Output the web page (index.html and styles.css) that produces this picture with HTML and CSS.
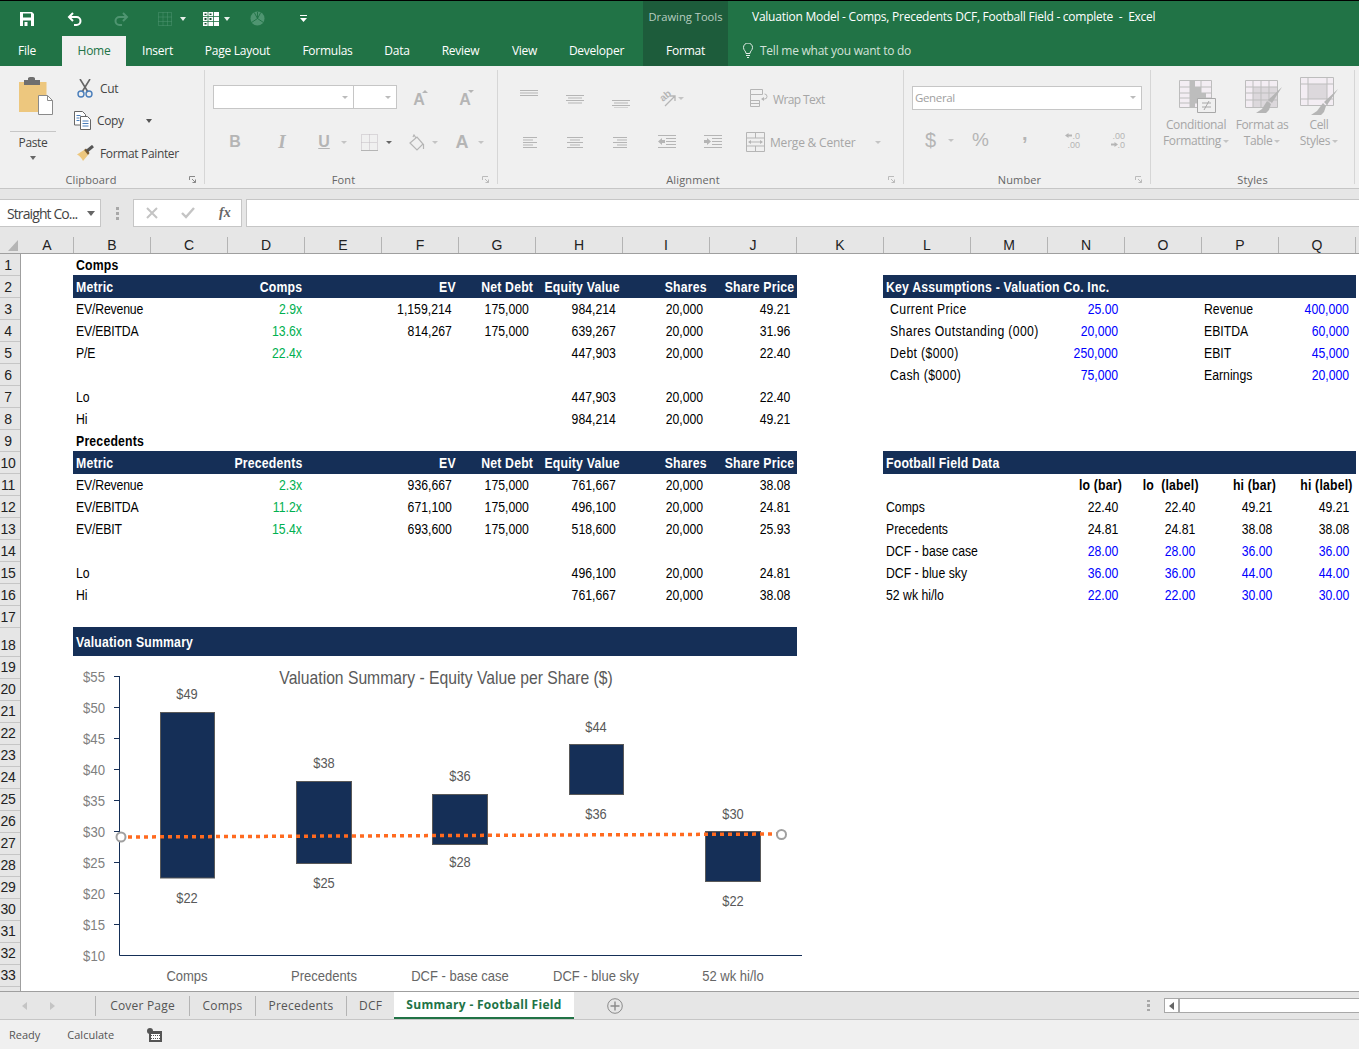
FILE: index.html
```html
<!DOCTYPE html>
<html lang="en">
<head>
<meta charset="utf-8">
<title>Valuation Model - Excel</title>
<link rel="stylesheet" href="styles.css">
</head>
<body>
<div class="app">

<header class="chrome">
  <div class="titlerow">
    <div class="qat">
      <svg class="q-save" width="14" height="14" viewBox="0 0 14 14"><path fill="#fff" d="M0 0h12l2 2v12H0z"/><path fill="#217346" d="M3 1.500h8v4H3zM3 8.500h8V14H3z"/><path fill="#fff" d="M4.500 10h3v4h-3z"/></svg>
      <svg class="q-undo" width="15" height="14" viewBox="0 0 15 14"><path fill="none" stroke="#fff" stroke-width="2" d="M6 1 2 5l4 4M2 5h7.500a4 4 0 0 1 0 8H7"/></svg>
      <svg class="q-redo" width="15" height="14" viewBox="0 0 15 14"><path fill="none" stroke="#4f9571" stroke-width="2" d="m9 1 4 4-4 4m4-4H5.500a4 4 0 0 0 0 8H8"/></svg>
      <svg class="q-grid" width="14" height="14" viewBox="0 0 14 14"><path fill="none" stroke="#4f9571" stroke-dasharray="1 1" d="M.5.500h13v13H.500zM5 .5v13M9.500.5v13M.5 5h13M.5 9.500h13"/></svg>
      <svg class="caret q-c1" width="6" height="4" viewBox="0 0 6 4"><path fill="#e8f0eb" d="M0 0h6L3 4z"/></svg>
      <svg class="q-table" width="16" height="14" viewBox="0 0 16 14"><path fill="#fff" d="M0 0h16v14H0z"/><path fill="none" stroke="#217346" stroke-width=".8" d="M5 0v14M10.500 0v14M0 4.500h16M0 9.500h16"/><path fill="#174d30" d="M1.500 1.500h2v1.500h-2zM6.500 1.500h2v1.500h-2zM1.500 6h2v2h-2zM6.500 6h2v2h-2zM1.500 11h2v1.500h-2z"/></svg>
      <svg class="caret q-c2" width="6" height="4" viewBox="0 0 6 4"><path fill="#e8f0eb" d="M0 0h6L3 4z"/></svg>
      <svg class="q-pie" width="15" height="15" viewBox="0 0 16 16"><circle cx="8" cy="8" r="7.500" fill="#4f9571"/><path fill="none" stroke="#217346" d="M8 8V1M8 8l6 4M8 8l-6 4M8 8l3.500-6.500M8 8 4.500 1.500"/></svg>
      <svg class="q-more" width="7" height="7" viewBox="0 0 7 7"><path fill="#fff" d="M0 0h7v1H0zM0 3h7L3.500 7z"/></svg>
    </div>
    <div class="tools-title">Drawing Tools</div>
    <div class="doc-title">Valuation Model - Comps, Precedents DCF, Football Field - complete&nbsp; -&nbsp; Excel</div>
  </div>
  <nav class="tabrow">
    <div class="rtab file">File</div>
    <div class="rtab home">Home</div>
    <div class="rtab">Insert</div>
    <div class="rtab">Page Layout</div>
    <div class="rtab">Formulas</div>
    <div class="rtab">Data</div>
    <div class="rtab">Review</div>
    <div class="rtab">View</div>
    <div class="rtab dev">Developer</div>
    <div class="rtab format">Format</div>
    <div class="tell">
      <svg width="10" height="15" viewBox="0 0 10 15"><path fill="none" stroke="#e4eee8" d="M3 10.500C3 8 .5 7.500.5 4.500a4.500 4.500 0 0 1 9 0C9.500 7.500 7 8 7 10.500zM3 12.500h4M4 14.500h2"/></svg>
      <span>Tell me what you want to do</span>
    </div>
  </nav>
</header>

<section class="ribbon">
  <div class="group g-clip">
    <div class="g-body clip">
      <div class="paste">
        <svg class="paste-ic" width="34" height="38" viewBox="0 0 34 38"><path fill="#edc77e" d="M0 5h27.500v30H0z"/><path fill="#6f6f6f" d="M5 3h4V1.500C9 .5 10 0 12.500 0S16 .5 16 1.500V3h5v5H5z"/><path fill="#fff" stroke="#8a8a8a" d="M19.500 18.500h9l5 5v14h-14z"/><path fill="none" stroke="#8a8a8a" d="M28.500 18.500v5h5"/></svg>
        <div class="paste-line"></div>
        <div class="paste-t">Paste</div>
        <svg class="paste-c" width="6" height="4" viewBox="0 0 6 4"><path fill="#666" d="M0 0h6L3 4z"/></svg>
      </div>
      <div class="cliplist">
        <div class="cl cl-cut">
          <svg width="16" height="19" viewBox="0 0 16 19"><path fill="none" stroke="#666" stroke-width="1.600" d="M3 0l8 13M13 0 5 13"/><circle cx="4" cy="15" r="3" fill="none" stroke="#4a7ebb" stroke-width="1.400"/><circle cx="12" cy="15" r="3" fill="none" stroke="#4a7ebb" stroke-width="1.400"/></svg>
          <span>Cut</span>
        </div>
        <div class="cl cl-copy">
          <svg width="17" height="19" viewBox="0 0 17 19"><path fill="#fff" stroke="#666" d="M.5.500h8l3 3V14H.500z"/><path fill="#fff" stroke="#666" d="M6.500 5.500h7l3 3v10h-10z"/><path stroke="#4a7ebb" d="M2.500 4.500h4M2.500 7h3M2.500 9.500h3M8.500 10h6M8.500 12.500h6M8.500 15h6"/></svg>
          <span>Copy</span>
          <svg class="copy-c" width="6" height="4" viewBox="0 0 6 4"><path fill="#555" d="M0 0h6L3 4z"/></svg>
        </div>
        <div class="cl cl-fp">
          <svg width="18" height="16" viewBox="0 0 18 16"><path fill="#edc77e" d="M0 9.500 7 5l4 5-5 6c-1-2-3-5-6-6.500z"/><path fill="#7a5a2c" d="m7 5 2-1.500 3.500 4.500L11 10z"/><path stroke="#555" stroke-width="3" d="m10 6 6-5"/></svg>
          <span>Format Painter</span>
        </div>
      </div>
    </div>
    <div class="g-foot pad7"><span class="g-name">Clipboard</span><svg class="launch" width="7" height="7" viewBox="0 0 7 7"><path fill="none" stroke="#888" d="M.5 4V.5H6M3 3l3.500 3.500M3.500 6.500h3v-3"/></svg></div>
  </div>
  <div class="sep"></div>

  <div class="group g-font">
    <div class="g-body fontb">
      <div class="r1">
        <div class="inbox font-name"><svg width="6" height="3" viewBox="0 0 6 3"><path fill="#bbb" d="M0 0h6L3 3z"/></svg></div>
        <div class="inbox font-size"><svg width="6" height="3" viewBox="0 0 6 3"><path fill="#bbb" d="M0 0h6L3 3z"/></svg></div>
        <div class="grow up"><span>A</span><svg width="6" height="3" viewBox="0 0 6 3"><path fill="#b5b5b5" d="M3 0l3 3H0z"/></svg></div>
        <div class="grow down"><span>A</span><svg width="6" height="3" viewBox="0 0 6 3"><path fill="#b5b5b5" d="M0 0h6L3 3z"/></svg></div>
      </div>
      <div class="r2">
        <span class="tb tb-b">B</span>
        <span class="tb tb-i">I</span>
        <span class="tb tb-u">U</span>
        <svg class="c1" width="6" height="3" viewBox="0 0 6 3"><path fill="#c4c4c4" d="M0 0h6L3 3z"/></svg>
        <svg class="bd" width="17" height="17" viewBox="0 0 17 17"><path fill="none" stroke="#c3bcc3" stroke-dasharray="1 1" d="M.5.500h16v16H.500zM8.500.5v16M.5 8.500h16"/><path stroke="#b5b5b5" d="M0 16.500h17"/></svg>
        <svg class="c2" width="6" height="3" viewBox="0 0 6 3"><path fill="#666" d="M0 0h6L3 3z"/></svg>
        <svg class="fl" width="17" height="17" viewBox="0 0 17 17"><path fill="none" stroke="#b5b5b5" stroke-width="1.200" d="M1 9l7-6 6 7-6 6zM7 4 5 1l-1 2M14.500 10v5"/></svg>
        <svg class="c3" width="6" height="3" viewBox="0 0 6 3"><path fill="#c4c4c4" d="M0 0h6L3 3z"/></svg>
        <span class="tb tb-a">A</span>
        <svg class="c4" width="6" height="3" viewBox="0 0 6 3"><path fill="#c4c4c4" d="M0 0h6L3 3z"/></svg>
      </div>
    </div>
    <div class="g-foot"><span class="g-name">Font</span><svg class="launch" width="7" height="7" viewBox="0 0 7 7"><path fill="none" stroke="#bbb" d="M.5 4V.5H6M3 3l3.500 3.500M3.500 6.500h3v-3"/></svg></div>
  </div>
  <div class="sep"></div>

  <div class="group g-align">
    <div class="g-body alignb">
      <div class="ar ar1">
        <svg class="a1" width="18" height="20" viewBox="0 0 18 20"><path stroke="#b5b5b5" d="M0 2.500h18M0 5h18M0 7.500h18"/></svg>
        <svg class="a2" width="18" height="20" viewBox="0 0 18 20"><path stroke="#b5b5b5" d="M0 7.500h18M2 10h14M0 12.500h18M2 15h14"/></svg>
        <svg class="a2" width="18" height="20" viewBox="0 0 18 20"><path stroke="#b5b5b5" d="M0 12.500h18M2 15h14M0 17.500h18M2 20h14"/></svg>
        <svg class="a-or" width="19" height="20" viewBox="0 0 19 20"><text class="orient" transform="rotate(-40 6 14)" x="6" y="14">ab</text><path fill="none" stroke="#b5b5b5" stroke-width="1.300" d="M8 18 18 8M13 8h5v5"/></svg>
        <svg class="a-orc" width="6" height="3" viewBox="0 0 6 3"><path fill="#c4c4c4" d="M0 0h6L3 3z"/></svg>
        <svg class="a-wr" width="18" height="20" viewBox="0 0 18 20"><path fill="none" stroke="#b5b5b5" d="M.5 1.500h12v5H.5zM.5 6.500v12h9v-6H.5M.5 15.500h9M12 11h2.500a2.500 2.500 0 0 0 0-5"/><path fill="#b5b5b5" d="m14 9-3 2 3 2z"/></svg>
        <span class="a-t a-wrt">Wrap Text</span>
      </div>
      <div class="ar ar2">
        <svg class="a1" width="18" height="20" viewBox="0 0 18 20"><path stroke="#b5b5b5" d="M3 5.500h14M3 8h10M3 10.500h14M3 13h10M3 15.500h14"/></svg>
        <svg class="a2" width="18" height="20" viewBox="0 0 18 20"><path stroke="#b5b5b5" d="M1 5.500h16M4 8h10M1 10.500h16M4 13h10M1 15.500h16"/></svg>
        <svg class="a2" width="18" height="20" viewBox="0 0 18 20"><path stroke="#b5b5b5" d="M1 5.500h14M5 8h10M1 10.500h14M5 13h10M1 15.500h14"/></svg>
        <svg class="a2" width="18" height="20" viewBox="0 0 18 20"><path stroke="#b5b5b5" d="M0 3.500h18M8 6.500h10M8 9.500h10M8 12.500h10M0 15.500h18"/><path fill="#b5b5b5" d="M0 9.500 4 6v2h3v3H4v2z"/></svg>
        <svg class="a2" width="18" height="20" viewBox="0 0 18 20"><path stroke="#b5b5b5" d="M0 3.500h18M8 6.500h10M8 9.500h10M8 12.500h10M0 15.500h18"/><path fill="#b5b5b5" d="M7 9.500 3 6v2H0v3h3v2z"/></svg>
        <svg class="a-mg" width="19" height="20" viewBox="0 0 19 20"><path fill="none" stroke="#b5b5b5" d="M.5.500h18v19H.5zM.5 6h18M.5 14h18M9.500.5V6M9.500 14v5.500M3 10h13"/><path fill="#b5b5b5" d="M2 10l3-2v4zM17 10l-3-2v4z"/></svg>
        <span class="a-t a-mgt">Merge &amp; Center</span>
        <svg class="a-mgc" width="6" height="3" viewBox="0 0 6 3"><path fill="#c4c4c4" d="M0 0h6L3 3z"/></svg>
      </div>
    </div>
    <div class="g-foot"><span class="g-name">Alignment</span><svg class="launch" width="7" height="7" viewBox="0 0 7 7"><path fill="none" stroke="#bbb" d="M.5 4V.5H6M3 3l3.500 3.500M3.500 6.500h3v-3"/></svg></div>
  </div>
  <div class="sep"></div>

  <div class="group g-num">
    <div class="g-body numb">
      <div class="inbox gen">General<svg width="6" height="3" viewBox="0 0 6 3"><path fill="#bbb" d="M0 0h6L3 3z"/></svg></div>
      <div class="nr">
        <span class="ntx n-d">$</span>
        <svg class="n-dc" width="6" height="3" viewBox="0 0 6 3"><path fill="#c4c4c4" d="M0 0h6L3 3z"/></svg>
        <span class="ntx n-p">%</span>
        <span class="ntx n-c">,</span>
        <svg class="n-i1" width="17" height="20" viewBox="0 0 17 20"><text x="16" y="9" class="nsm">.0</text><text x="16" y="18" class="nsm">.00</text><path fill="#b5b5b5" d="M1 5.500 4.500 3v1.500H8v2H4.500V8z"/></svg>
        <svg class="n-i2" width="17" height="20" viewBox="0 0 17 20"><text x="16" y="9" class="nsm">.00</text><text x="16" y="18" class="nsm">.0</text><path fill="#b5b5b5" d="M9 14.500 5.500 12v1.500H2v2h3.500V17z"/></svg>
      </div>
    </div>
    <div class="g-foot"><span class="g-name">Number</span><svg class="launch" width="7" height="7" viewBox="0 0 7 7"><path fill="none" stroke="#bbb" d="M.5 4V.5H6M3 3l3.500 3.500M3.500 6.500h3v-3"/></svg></div>
  </div>
  <div class="sep"></div>

  <div class="group g-styles">
    <div class="g-body stylesb">
      <div class="st st-cf">
        <svg width="37" height="39" viewBox="0 0 37 39"><path fill="#f3edf3" stroke="#bdbdbd" d="M.5 3.500h32v27H.500z"/><path fill="#bdbdbd" d="M11 4h5v6h-5zM11 10h11v6H11zM11 16h16v5H11zM11 21h11v5H11zM11 26h5v5h-5z"/><path fill="none" stroke="#bdbdbd" d="M11 3.500v27M22 3.500v27M.5 10h32M.5 16h32M.5 21h32M.5 26h32"/><path fill="#f0f0f0" stroke="#a8a8a8" d="M18.500 21.500h18v14h-18z"/><path stroke="#a8a8a8" d="M23 26h9M23 30h9M30 24l-5 9"/></svg>
        <div class="st-t">Conditional</div>
        <div class="st-t">Formatting<svg width="6" height="3" viewBox="0 0 6 3"><path fill="#c4c4c4" d="M0 0h6L3 3z"/></svg></div>
      </div>
      <div class="st st-ft">
        <svg width="37" height="39" viewBox="0 0 37 39"><path fill="#f3edf3" stroke="#bdbdbd" d="M.5 3.500h32v27H.500z"/><path fill="#dcd8dc" d="M8 10h24v20H8z"/><path fill="none" stroke="#bdbdbd" d="M8 3.500v27M16 3.500v27M24 3.500v27M.5 10h32M.5 16h32M.5 23h32"/><path fill="#b5b5b5" d="m37 10-10 16-4-3zM22 24l4 3-2 6-3 3H11l6-4z"/></svg>
        <div class="st-t">Format as</div>
        <div class="st-t">Table<svg width="6" height="3" viewBox="0 0 6 3"><path fill="#c4c4c4" d="M0 0h6L3 3z"/></svg></div>
      </div>
      <div class="st st-cs">
        <svg width="38" height="39" viewBox="0 0 38 39"><path fill="#f3edf3" stroke="#bdbdbd" d="M.5.500h33v28H.500z"/><path fill="#dcd8dc" d="M8 7h19v15H8z"/><path fill="none" stroke="#bdbdbd" d="M.5 7h33M.5 22h33M8 .5v28M27 .5v28"/><path fill="#b5b5b5" d="m38 12-11 16-3-3zM23 26l3 3-2 6-3 3H11l6-4z"/></svg>
        <div class="st-t">Cell</div>
        <div class="st-t">Styles<svg width="6" height="3" viewBox="0 0 6 3"><path fill="#c4c4c4" d="M0 0h6L3 3z"/></svg></div>
      </div>
    </div>
    <div class="g-foot"><span class="g-name">Styles</span></div>
  </div>
  <div class="sep"></div>
</section>

<section class="fbar">
  <div class="fbox namebox"><span>Straight Co...</span><svg width="8" height="5" viewBox="0 0 8 5"><path fill="#666" d="M0 0h8L4 5z"/></svg></div>
  <svg class="grip" width="3" height="13" viewBox="0 0 3 13"><path fill="#a8a8a8" d="M0 0h3v3H0zM0 5h3v3H0zM0 10h3v3H0z"/></svg>
  <div class="fbox fxbox">
    <svg width="14" height="12" viewBox="0 0 14 12"><path fill="none" stroke="#c4c4c4" stroke-width="2" d="m2 1 10 10M12 1 2 11"/></svg>
    <svg width="14" height="12" viewBox="0 0 14 12"><path fill="none" stroke="#c4c4c4" stroke-width="2.400" d="m1 6 4 4 8-9"/></svg>
    <span class="fx">fx</span>
  </div>
  <div class="fbox finput"></div>
</section>

<div class="colhead">
  <div class="corner"><svg width="10" height="11" viewBox="0 0 10 11"><path fill="#b5b5b5" d="M10 0v11H0z"/></svg></div>
  <div class="ch">A</div><div class="ch">B</div><div class="ch">C</div><div class="ch">D</div><div class="ch">E</div><div class="ch">F</div><div class="ch">G</div><div class="ch">H</div><div class="ch">I</div><div class="ch">J</div><div class="ch">K</div><div class="ch">L</div><div class="ch">M</div><div class="ch">N</div><div class="ch">O</div><div class="ch">P</div><div class="ch">Q</div>
</div>

<main class="sheet">
  <div class="rowheads">
    <div>1</div><div>2</div><div>3</div><div>4</div><div>5</div><div>6</div><div>7</div><div>8</div><div>9</div><div>10</div><div>11</div><div>12</div><div>13</div><div>14</div><div>15</div><div>16</div><div>17</div><div class="tall">18</div><div>19</div><div>20</div><div>21</div><div>22</div><div>23</div><div>24</div><div>25</div><div>26</div><div>27</div><div>28</div><div>29</div><div>30</div><div>31</div><div>32</div><div>33</div><div></div>
  </div>
  <div class="cells">
    <div class="row"><div class="c cB b">Comps</div></div>
    <div class="row"><div class="band band-l"></div><div class="band band-r"></div>
      <div class="c cB h">Metric</div><div class="c cD h r">Comps</div><div class="c cF h r">EV</div><div class="c cG h r">Net Debt</div><div class="c cH h r">Equity Value</div><div class="c cI h r">Shares</div><div class="c cJ h r">Share Price</div><div class="c cL h">Key Assumptions - Valuation Co. Inc.</div></div>
    <div class="row"><div class="c cB">EV/Revenue</div><div class="c cD r g">2.9x</div><div class="c cF n">1,159,214</div><div class="c cG n">175,000</div><div class="c cH n">984,214</div><div class="c cI n">20,000</div><div class="c cJ n">49.21</div><div class="c cL in">Current Price</div><div class="c cN n bl">25.00</div><div class="c cP">Revenue</div><div class="c cQ n bl">400,000</div></div>
    <div class="row"><div class="c cB">EV/EBITDA</div><div class="c cD r g">13.6x</div><div class="c cF n">814,267</div><div class="c cG n">175,000</div><div class="c cH n">639,267</div><div class="c cI n">20,000</div><div class="c cJ n">31.96</div><div class="c cL in">Shares Outstanding (000)</div><div class="c cN n bl">20,000</div><div class="c cP">EBITDA</div><div class="c cQ n bl">60,000</div></div>
    <div class="row"><div class="c cB">P/E</div><div class="c cD r g">22.4x</div><div class="c cH n">447,903</div><div class="c cI n">20,000</div><div class="c cJ n">22.40</div><div class="c cL in">Debt ($000)</div><div class="c cN n bl">250,000</div><div class="c cP">EBIT</div><div class="c cQ n bl">45,000</div></div>
    <div class="row"><div class="c cL in">Cash ($000)</div><div class="c cN n bl">75,000</div><div class="c cP">Earnings</div><div class="c cQ n bl">20,000</div></div>
    <div class="row"><div class="c cB">Lo</div><div class="c cH n">447,903</div><div class="c cI n">20,000</div><div class="c cJ n">22.40</div></div>
    <div class="row"><div class="c cB">Hi</div><div class="c cH n">984,214</div><div class="c cI n">20,000</div><div class="c cJ n">49.21</div></div>
    <div class="row"><div class="c cB b">Precedents</div></div>
    <div class="row"><div class="band band-l"></div><div class="band band-r"></div>
      <div class="c cB h">Metric</div><div class="c cD h r">Precedents</div><div class="c cF h r">EV</div><div class="c cG h r">Net Debt</div><div class="c cH h r">Equity Value</div><div class="c cI h r">Shares</div><div class="c cJ h r">Share Price</div><div class="c cL h">Football Field Data</div></div>
    <div class="row"><div class="c cB">EV/Revenue</div><div class="c cD r g">2.3x</div><div class="c cF n">936,667</div><div class="c cG n">175,000</div><div class="c cH n">761,667</div><div class="c cI n">20,000</div><div class="c cJ n">38.08</div><div class="c cN b r">lo (bar)</div><div class="c cO b r">lo&nbsp; (label)</div><div class="c cP b r">hi (bar)</div><div class="c cQ b r">hi (label)</div></div>
    <div class="row"><div class="c cB">EV/EBITDA</div><div class="c cD r g">11.2x</div><div class="c cF n">671,100</div><div class="c cG n">175,000</div><div class="c cH n">496,100</div><div class="c cI n">20,000</div><div class="c cJ n">24.81</div><div class="c cL">Comps</div><div class="c cN n">22.40</div><div class="c cO n">22.40</div><div class="c cP n">49.21</div><div class="c cQ n">49.21</div></div>
    <div class="row"><div class="c cB">EV/EBIT</div><div class="c cD r g">15.4x</div><div class="c cF n">693,600</div><div class="c cG n">175,000</div><div class="c cH n">518,600</div><div class="c cI n">20,000</div><div class="c cJ n">25.93</div><div class="c cL">Precedents</div><div class="c cN n">24.81</div><div class="c cO n">24.81</div><div class="c cP n">38.08</div><div class="c cQ n">38.08</div></div>
    <div class="row"><div class="c cL">DCF - base case</div><div class="c cN n bl">28.00</div><div class="c cO n bl">28.00</div><div class="c cP n bl">36.00</div><div class="c cQ n bl">36.00</div></div>
    <div class="row"><div class="c cB">Lo</div><div class="c cH n">496,100</div><div class="c cI n">20,000</div><div class="c cJ n">24.81</div><div class="c cL">DCF - blue sky</div><div class="c cN n bl">36.00</div><div class="c cO n bl">36.00</div><div class="c cP n bl">44.00</div><div class="c cQ n bl">44.00</div></div>
    <div class="row"><div class="c cB">Hi</div><div class="c cH n">761,667</div><div class="c cI n">20,000</div><div class="c cJ n">38.08</div><div class="c cL">52 wk hi/lo</div><div class="c cN n bl">22.00</div><div class="c cO n bl">22.00</div><div class="c cP n bl">30.00</div><div class="c cQ n bl">30.00</div></div>
    <div class="row"></div>
    <div class="row tall"><div class="band band-l"></div><div class="c cB h">Valuation Summary</div></div>

    <svg class="chart" width="1338" height="334" viewBox="21 657 1338 334">
      <g class="axis">
        <path d="M119.500 676v279.500H802"/>
        <path d="M114 676.500h5M114 707.500h5M114 738.500h5M114 769.500h5M114 800.500h5M114 831.500h5M114 862.500h5M114 893.500h5M114 924.500h5"/>
      </g>
      <g class="ylab">
        <text x="105" y="682">$55</text><text x="105" y="713">$50</text><text x="105" y="744">$45</text><text x="105" y="775">$40</text><text x="105" y="806">$35</text><text x="105" y="837">$30</text><text x="105" y="868">$25</text><text x="105" y="899">$20</text><text x="105" y="930">$15</text><text x="105" y="961">$10</text>
      </g>
      <text class="ctitle" x="446" y="684">Valuation Summary - Equity Value per Share ($)</text>
      <g class="bars">
        <rect x="160.500" y="712.500" width="54" height="165.500"/>
        <rect x="296.500" y="781.500" width="55" height="82"/>
        <rect x="432.500" y="794.500" width="55" height="50"/>
        <rect x="569.500" y="744.500" width="54" height="50"/>
        <rect x="705.500" y="831.500" width="55" height="50"/>
      </g>
      <path class="dots" d="M128 837 781 834"/>
      <circle class="mark" cx="121" cy="837" r="4.500"/>
      <circle class="mark" cx="781.500" cy="834.500" r="4.500"/>
      <g class="dlab">
        <text x="187" y="699">$49</text><text x="187" y="903">$22</text>
        <text x="324" y="768">$38</text><text x="324" y="888">$25</text>
        <text x="460" y="781">$36</text><text x="460" y="867">$28</text>
        <text x="596" y="732">$44</text><text x="596" y="819">$36</text>
        <text x="733" y="819">$30</text><text x="733" y="906">$22</text>
      </g>
      <g class="xlab">
        <text x="187" y="981">Comps</text><text x="324" y="981">Precedents</text><text x="460" y="981">DCF - base case</text><text x="596" y="981">DCF - blue sky</text><text x="733" y="981">52 wk hi/lo</text>
      </g>
    </svg>
  </div>
</main>

<footer class="sheettabs">
  <div class="nav">
    <svg width="5" height="8" viewBox="0 0 5 8"><path fill="#c4c4c4" d="M5 0v8L0 4z"/></svg>
    <svg width="5" height="8" viewBox="0 0 5 8"><path fill="#c4c4c4" d="M0 0v8l5-4z"/></svg>
  </div>
  <div class="stab t1">Cover Page</div>
  <div class="stab t2">Comps</div>
  <div class="stab t3">Precedents</div>
  <div class="stab t4">DCF</div>
  <div class="stab active">Summary - Football Field</div>
  <svg class="addsheet" width="16" height="16" viewBox="0 0 16 16"><circle cx="8" cy="8" r="7.300" fill="none" stroke="#8a8a8a"/><path stroke="#8a8a8a" stroke-width="1.400" d="M8 3.500v9M3.500 8h9"/></svg>
  <svg class="tabgrip" width="3" height="11" viewBox="0 0 3 11"><path fill="#a8a8a8" d="M0 0h3v2H0zM0 4h3v3H0zM0 9h3v2H0z"/></svg>
  <div class="hscroll"><div class="hleft"><svg width="5" height="8" viewBox="0 0 5 8"><path fill="#666" d="M5 0v8L0 4z"/></svg></div></div>
</footer>
<div class="status">
  <span>Ready</span>
  <span class="calc">Calculate</span>
  <svg class="stat-ic" width="15" height="14" viewBox="0 0 15 14"><circle cx="3" cy="3" r="3" fill="#555"/><path fill="#555" d="M2 3h13v11H2z"/><path fill="#fff" d="M4 6h9v6H4z"/><path stroke="#555" stroke-dasharray="1 1" d="M4 7.500h9M4 10.500h9"/></svg>
</div>
</div>
</body>
</html>
```

FILE: styles.css
```css
* { box-sizing: border-box; }
html, body { margin: 0; padding: 0; height: 100%; overflow: hidden; }
body { background: #fff; font-family: "Open Sans", "Noto Sans", sans-serif; color: #444; }
svg { display: block; flex: none; }
.app { height: 1049px; display: flex; flex-direction: column; overflow: hidden; }

/* title + tabs */
.chrome { background: #217346; border-top: 1px solid #000; color: #fff; font-size: 12px; letter-spacing: -.25px; flex: none; }
.titlerow { display: flex; height: 35px; }
.qat { width: 643px; display: flex; align-items: center; }
.q-save { margin-left: 20px; }
.q-undo { margin-left: 33px; }
.q-redo { margin-left: 32px; }
.q-grid { margin-left: 29px; }
.q-c1 { margin-left: 8px; }
.q-table { margin-left: 17px; }
.q-c2 { margin-left: 5px; }
.q-pie { margin-left: 20px; }
.q-more { margin-left: 35px; }
.tools-title { width: 85px; background: #1d5c3b; color: #b7cdc0; text-align: center; line-height: 31px; font-size: 11.200px; letter-spacing: 0; }
.doc-title { padding-left: 24px; line-height: 31px; white-space: nowrap; }
.tabrow { display: grid; height: 30px; grid-template-columns: 62px 64px 63px 97px 83px 56px 71px 57px 90px 85px 1fr; }
.rtab { text-align: center; line-height: 30px; white-space: nowrap; }
.rtab.file { padding-right: 8px; }
.rtab.home { background: #f0f0f0; color: #217346; }
.rtab.dev { padding-right: 3px; }
.rtab.format { background: #1d5c3b; }
.tell { display: flex; align-items: center; gap: 7px; padding: 0 0 1px 15px; color: #d3e2d9; }

/* ribbon */
.ribbon { display: flex; height: 123px; background: #f0f0f0; border-bottom: 1px solid #c6c6c6; flex: none; font-size: 12px; letter-spacing: -.35px; }
.sep { width: 1px; height: 114px; margin-top: 4px; background: #d6d6d6; flex: none; }
.group { height: 122px; display: flex; flex-direction: column; flex: none; }
.g-clip { width: 204px; }
.g-font { width: 292px; }
.g-align { width: 405px; }
.g-num { width: 246px; }
.g-styles { width: 203px; }
.g-body { flex: 1; min-height: 0; }
.g-foot { height: 15px; margin-bottom: 1px; display: flex; align-items: center; }
.g-foot.pad7 .g-name { padding-right: 7px; }
.g-name { flex: 1; text-align: center; color: #666; font-size: 11px; letter-spacing: .15px; line-height: 15px; }
.launch { margin: 0 8px 0 0; }

.clip { display: flex; }
.paste { width: 46px; margin-left: 10px; padding-top: 11px; }
.paste-ic { margin-left: 9px; }
.paste-line { height: 1px; background: #c6c6c6; margin-top: 16px; }
.paste-t { text-align: center; line-height: 16px; margin-top: 3px; }
.paste-c { margin: 5px auto 0; }
.cliplist { margin-left: 18px; padding-top: 12px; display: flex; flex-direction: column; gap: 12.500px; }
.cl { height: 20px; display: flex; align-items: center; white-space: nowrap; }
.cl-cut { padding-left: 3px; gap: 7px; }
.cl-copy { gap: 6px; }
.copy-c { margin-left: 16px; }
.cl-fp { padding-left: 3px; gap: 5px; }

.inbox { background: #fff; border: 1px solid #c6c6c6; display: flex; align-items: center; justify-content: flex-end; padding-right: 5px; }
.fontb { padding-top: 19px; }
.r1 { display: flex; height: 24px; padding-left: 8px; }
.font-name { width: 141px; height: 24px; }
.font-size { width: 43px; height: 24px; border-left: 0; }
.grow { position: relative; width: 20px; color: #b5b5b5; font: 700 16px/30px "Liberation Sans", sans-serif; text-align: center; letter-spacing: 0; }
.grow svg { position: absolute; right: 1px; top: 5px; }
.up { margin-left: 12px; }
.down { margin-left: 26px; }
.r2 { display: flex; align-items: center; height: 24px; margin-top: 21px; }
.tb { color: #b5b5b5; font: 700 16px/24px "Liberation Sans", sans-serif; width: 14px; text-align: center; letter-spacing: 0; }
.tb-b { margin-left: 23px; }
.tb-i { margin-left: 33px; font: italic 700 19px/24px "Liberation Serif", serif; }
.tb-u { margin-left: 28px; text-decoration: underline; }
.c1 { margin-left: 10px; }
.bd { margin-left: 14px; }
.c2 { margin-left: 8px; }
.fl { margin-left: 17px; }
.c3 { margin-left: 6px; }
.tb-a { margin-left: 17px; font-size: 18px; }
.c4 { margin-left: 9px; }

.alignb { padding-top: 22px; }
.ar { display: flex; align-items: center; height: 20px; }
.ar2 { margin-top: 24px; }
.a1 { margin-left: 22px; }
.a2 { margin-left: 28px; }
.a-or { margin-left: 27px; }
.a-orc { margin-left: 2px; }
.a-wr { margin-left: 66px; }
.a-t { color: #a6a6a6; white-space: nowrap; margin-left: 5px; }
.a-wrt { margin-top: 3px; letter-spacing: -.6px; }
.a-mg { margin-left: 24px; }
.a-mgt { width: 85px; letter-spacing: -.2px; }
.a-mgc { margin-left: 20px; }
.orient { fill: #b5b5b5; font: 700 10px "Liberation Sans", sans-serif; letter-spacing: 0; }

.numb { padding-top: 20px; }
.gen { width: 230px; height: 24px; margin-left: 8px; justify-content: space-between; color: #a0a0a0; padding: 0 5px 2px 2px; font-size: 11.500px; }
.nr { display: flex; align-items: center; height: 20px; margin-top: 20px; }
.ntx { color: #b5b5b5; font-family: "Liberation Sans", sans-serif; letter-spacing: 0; }
.n-d { margin-left: 21px; font-size: 20px; width: 12px; }
.n-dc { margin-left: 11px; }
.n-p { margin-left: 18px; font-size: 19px; width: 18px; }
.n-c { margin: 0 0 14px 32px; font-size: 20px; font-weight: 700; width: 8px; line-height: 12px; }
.n-i1 { margin-left: 34px; }
.n-i2 { margin-left: 28px; }
.nsm { fill: #b5b5b5; font: 9px "Liberation Sans", sans-serif; letter-spacing: 0; text-anchor: end; }

.stylesb { display: flex; padding: 11px 0 0 6px; }
.st { text-align: center; color: #a6a6a6; flex: none; }
.st > svg { margin: 0 auto 1px; }
.st-t { line-height: 16px; white-space: nowrap; display: flex; justify-content: center; align-items: center; gap: 2px; }
.st-cf { width: 78px; }
.st-cf > svg { margin-left: 22px; }
.st-ft { width: 54px; }
.st-ft > svg { margin-left: 10px; }
.st-cs { width: 54px; margin-left: 3px; }

/* formula bar */
.fbar { display: flex; align-items: center; height: 38px; padding-top: 10px; background: #e6e6e6; flex: none; }
.fbox { height: 28px; background: #fff; border: 1px solid #c6c6c6; }
.namebox { width: 101px; display: flex; align-items: center; justify-content: space-between; padding: 0 5px 0 7px; border-left: 0; font-size: 14px; letter-spacing: -.9px; color: #444; }
.grip { margin-left: 15px; }
.fxbox { width: 109px; margin-left: 14px; display: flex; align-items: center; padding-left: 11px; gap: 22px; }
.fx { font: italic 700 14px "Liberation Serif", serif; color: #666; letter-spacing: 0; margin-left: 2px; }
.finput { flex: 1; margin-left: 4px; border-right: 0; }

/* column + row heads */
.colhead { display: grid; grid-template-columns: 21px 53px repeat(6, 77px) repeat(5, 87px) repeat(5, 77px); height: 27px; padding-top: 10px; background: #e6e6e6; border-bottom: 1px solid #9f9f9f; flex: none; }
.corner { margin-top: 3px; padding-left: 8px; height: 13px; }
.ch { border-right: 1px solid #b4b4b4; text-align: center; font: 14px/16px "Liberation Sans", sans-serif; color: #222; }
.sheet { flex: 1; min-height: 0; display: flex; overflow: hidden; font: 14px/22px "Liberation Sans", Arial, sans-serif; color: #000; }
.rowheads { width: 21px; background: #e6e6e6; border-right: 1px solid #9f9f9f; flex: none; text-align: center; letter-spacing: -.3px; color: #222; }
.rowheads div { height: 22px; padding-right: 4px; border-bottom: 1px solid #c6c6c6; line-height: 22px; }
.rowheads div.tall { height: 29px; line-height: 34px; }
.rowheads div.tall ~ div { line-height: 21px; }
.cells { flex: 1; min-width: 0; overflow: hidden; }
.row { display: grid; grid-template-columns: 53px repeat(6, 77px) repeat(5, 87px) repeat(5, 77px) 4px; height: 22px; }
.row.tall { height: 29px; line-height: 29px; }
.row > * { grid-row: 1; }
.band { background: #152f57; margin-top: -1px; margin-left: -1px; height: 23px; }
.tall .band { height: 29px; }
.band-l { grid-column: 2 / 11; }
.band-r { grid-column: 12 / 18; width: 473px; }
.c { white-space: nowrap; padding: 0 2.300px; min-width: 0; transform: scaleX(.875); transform-origin: left center; }
.cB { grid-column: 2; letter-spacing: -.2px; }
.cD { grid-column: 4; }
.cF { grid-column: 6; }
.cG { grid-column: 7; }
.cH { grid-column: 8; }
.cI { grid-column: 9; }
.cJ { grid-column: 10; }
.cL { grid-column: 12; }
.cN { grid-column: 14; }
.cO { grid-column: 15; }
.cP { grid-column: 16; }
.cQ { grid-column: 17; }
.b { font-weight: 700; letter-spacing: .23px; }
.h { font-weight: 700; color: #fff; letter-spacing: .23px; }
.r { justify-self: end; text-align: right; padding-right: 3.400px; transform-origin: right center; }
.n { justify-self: end; text-align: right; padding-right: 8px; transform-origin: right center; }
.g { color: #00b050; }
.bl { color: #0000ff; }
.in { padding-left: 6.900px; letter-spacing: .4px; }

/* chart */
.chart { overflow: visible; }
.chart text { transform-box: fill-box; }
.axis path { fill: none; stroke: #152f57; stroke-width: 1; }
.ylab text { fill: #808080; font-size: 14px; text-anchor: end; transform: scaleX(.94); transform-origin: right center; }
.ctitle { fill: #595959; font-size: 18px; text-anchor: middle; transform: scaleX(.872); transform-origin: center; }
.bars rect { fill: #152f57; stroke: #595959; stroke-width: 1; }
.dots { fill: none; stroke: #ff6a1f; stroke-width: 3.500; stroke-dasharray: 4 4; }
.mark { fill: #fff; stroke: #a0a0a0; stroke-width: 2; }
.dlab text { fill: #595959; font-size: 14px; text-anchor: middle; transform: scaleX(.92); transform-origin: center; }
.xlab text { fill: #666; font-size: 14px; text-anchor: middle; transform: scaleX(.93); transform-origin: center; }

/* sheet tabs + status */
.sheettabs { height: 29px; background: #e6e6e6; border-top: 1px solid #9f9f9f; border-bottom: 1px solid #c6c6c6; display: flex; align-items: center; flex: none; font-size: 12px; letter-spacing: .2px; color: #555; }
.nav { width: 95px; display: flex; gap: 23px; padding-left: 22px; }
.stab { height: 20px; line-height: 20px; text-align: center; border-left: 1px solid #b4b4b4; white-space: nowrap; }
.t1 { width: 94px; }
.t2 { width: 66px; }
.t3 { width: 91px; }
.t4 { width: 48px; }
.stab.active { width: 180px; height: 28px; line-height: 26px; align-self: flex-start; background: #fff; border-left: 0; border-bottom: 2px solid #217346; color: #217346; font-weight: 700; letter-spacing: .3px; margin-top: -1px; border-top: 1px solid #9f9f9f; }
.addsheet { margin-left: 33px; }
.tabgrip { margin-left: 524px; }
.hscroll { margin-left: 14px; flex: 1; height: 15px; background: #fff; border: 1px solid #a8a8a8; border-right: 0; }
.hleft { width: 15px; height: 13px; border-right: 2px solid #a8a8a8; display: flex; align-items: center; justify-content: center; }
.status { height: 29px; flex: none; background: #f0f0f0; display: flex; align-items: center; font-size: 11px; padding-left: 9px; color: #555; }
.calc { margin-left: 27px; }
.stat-ic { margin-left: 33px; }
```
